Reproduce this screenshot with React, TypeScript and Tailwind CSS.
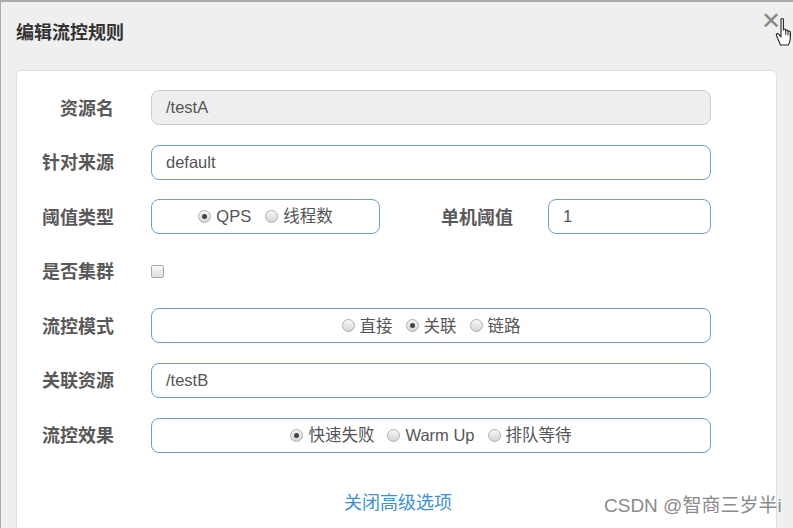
import React from "react";

const font = { fontFamily: '"Liberation Sans", "Noto Sans CJK SC", sans-serif' };

const Radio = ({ checked, label }: { checked?: boolean; label: string }) => (
  <label className="flex items-center gap-[5px]">
    <span className="w-[13px] h-[13px] rounded-full border border-[#b0b0b0] bg-gradient-to-b from-[#f6f6f6] to-[#d6d6d6] flex items-center justify-center">
      {checked && <span className="w-[5px] h-[5px] rounded-full bg-[#444]" />}
    </span>
    <span>{label}</span>
  </label>
);

const Row = ({ label, children }: { label: string; children: React.ReactNode }) => (
  <div className="flex items-center h-[35px]">
    <div className="w-[97px] pt-[3px] text-right text-[18px] font-bold text-[#595959] shrink-0">{label}</div>
    <div className="ml-[37px] flex-1 flex items-center h-full">{children}</div>
  </div>
);

const inputCls =
  "h-[35px] w-full rounded-[8px] border border-[#6e9dcf] bg-white px-[14px] flex items-center text-[16.5px] text-[#555]";

export default function App() {
  return (
    <div
      className="relative w-[793px] h-[528px] overflow-hidden bg-[#efefef] border-t-2 border-l border-[#a9a9a9]"
      style={font}
    >
      <div className="h-[68px] flex items-start pt-[18px] pl-[15px] pr-[10px] justify-between">
        <h4 className="text-[18px] leading-[26px] font-bold text-[#333]">编辑流控规则</h4>
        <span className="text-[24px] text-[#8a8a8a] leading-none -mt-[11px] mr-[2px]">✕</span>
      </div>

      <div className="ml-[15px] w-[761px] h-[480px] bg-white border border-[#e0e0e0] rounded-[5px] pt-[19px] pr-[65px]">
        <div className="flex flex-col gap-[19.6px]">
          <Row label="资源名">
            <div className={inputCls + " !bg-[#eeeeee] !border-[#cccccc]"}>/testA</div>
          </Row>
          <Row label="针对来源">
            <div className={inputCls}>default</div>
          </Row>
          <Row label="阈值类型">
            <div className="h-[35px] w-[229px] rounded-[8px] border border-[#6e9dcf] flex items-center justify-center gap-[14px] text-[16.5px] text-[#555]">
              <Radio checked label="QPS" />
              <Radio label="线程数" />
            </div>
            <div className="w-[133px] pt-[3px] text-right text-[18px] font-bold text-[#595959] shrink-0">单机阈值</div>
            <div className="ml-[35px] flex-1">
              <div className={inputCls}>1</div>
            </div>
          </Row>
          <Row label="是否集群">
            <span className="w-[13px] h-[13px] rounded-[2px] border border-[#a8a8a8] bg-gradient-to-b from-[#fafafa] to-[#dedede]" />
          </Row>
          <Row label="流控模式">
            <div className="h-[35px] w-full rounded-[8px] border border-[#6e9dcf] flex items-center justify-center gap-[13px] text-[16.5px] text-[#555]">
              <Radio label="直接" />
              <Radio checked label="关联" />
              <Radio label="链路" />
            </div>
          </Row>
          <Row label="关联资源">
            <div className={inputCls}>/testB</div>
          </Row>
          <Row label="流控效果">
            <div className="h-[35px] w-full rounded-[8px] border border-[#6e9dcf] flex items-center justify-center gap-[13px] text-[16.5px] text-[#555]">
              <Radio checked label="快速失败" />
              <Radio label="Warm Up" />
              <Radio label="排队等待" />
            </div>
          </Row>
        </div>
        <div className="mt-[37px] pl-[327px] text-[18px] leading-[27px] text-[#3d8fd6]">关闭高级选项</div>
      </div>

      <div className="absolute left-[603px] top-[491px] text-[19px] leading-[26px] text-[#8a8a8a] whitespace-nowrap [text-shadow:0_0_2px_#fff]">
        CSDN @智商三岁半i
      </div>

      <svg className="absolute left-[774px] top-[14px]" width="22" height="34" viewBox="0 0 22 34">
        <path
          d="M6 3.5c0-1.4 2.4-1.4 2.4 0v10.5c0-1.3 2.3-1.3 2.3 0v1c0-1.3 2.3-1.3 2.3 0v1c0-1.3 2.3-1.3 2.3 0v6.5c0 3-1.5 5-2 6.5H5.5L1.5 19.5c-.8-1.4 1-2.6 2.2-1.4L6 21V3.5z"
          fill="#fff"
          stroke="#222"
          strokeWidth="1.1"
          strokeLinejoin="round"
        />
        <path d="M10.7 15v4M13 16v3.5M15.3 17v3" stroke="#222" strokeWidth="0.9" />
      </svg>
    </div>
  );
}
